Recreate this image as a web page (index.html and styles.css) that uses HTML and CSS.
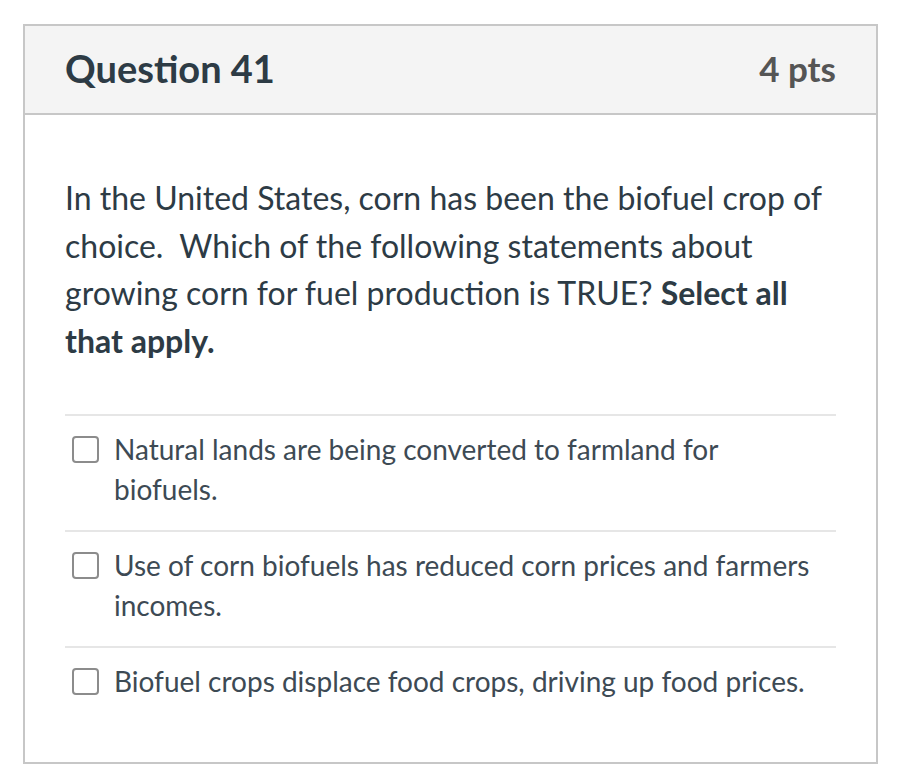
FILE: index.html
```html
<!DOCTYPE html>
<html>
<head>
<meta charset="utf-8">
<link rel="stylesheet" href="styles.css">
</head>
<body>
<div class="card">
  <div class="card-header">
    <h2 class="title">Question 41</h2>
    <span class="pts">4 pts</span>
  </div>
  <div class="card-body">
    <p class="question">In the United States, corn has been the biofuel crop of choice.&nbsp; Which of the following statements about growing corn for fuel production is TRUE? <strong>Select all that apply.</strong></p>
    <div class="answers">
      <label class="answer"><span class="box"></span><span class="answer-text">Natural lands are being converted to farmland for biofuels.</span></label>
      <label class="answer"><span class="box"></span><span class="answer-text">Use of corn biofuels has reduced corn prices and farmers incomes.</span></label>
      <label class="answer"><span class="box"></span><span class="answer-text">Biofuel crops displace food crops, driving up food prices.</span></label>
    </div>
  </div>
</div>
</body>
</html>
```
FILE: styles.css
```css
html, body {
  margin: 0;
  padding: 0;
  background: #ffffff;
}
body {
  font-family: Lato, "Open Sans", sans-serif;
  color: #2d3b45;
  padding: 24px 0 0 23px;
}
.card {
  width: 851px;
  height: 736px;
  border: 2px solid #c7c7c7;
  box-sizing: content-box;
}
.card-header {
  height: 89px;
  box-sizing: border-box;
  background: #f4f4f4;
  border-bottom: 2px solid #c7c7c7;
  display: flex;
  align-items: center;
  justify-content: space-between;
  padding: 0 40px 4px 40px;
}
.title {
  margin: 0;
  font-size: 38px;
  font-weight: 700;
  color: #2d3b45;
}
.pts {
  font-size: 35px;
  font-weight: 700;
  color: #555555;
}
.card-body {
  padding: 59px 40px 0 40px;
}
.question {
  margin: 0;
  font-size: 32px;
  line-height: 47.6px;
  color: #2d3b45;
}
.question strong {
  font-weight: 700;
}
.answers {
  margin-top: 50px;
}
.answer {
  display: flex;
  align-items: flex-start;
  border-top: 2px solid #e6e6e6;
  padding: 13px 20px 21px 7px;
}
.box {
  flex: none;
  width: 23px;
  height: 23px;
  border: 2px solid #8c8c8c;
  border-radius: 4px;
  margin-top: 7px;
  margin-right: 15px;
  background: #fff;
}
.answer-text {
  font-size: 28px;
  line-height: 40px;
  color: #3d4a54;
}
```
